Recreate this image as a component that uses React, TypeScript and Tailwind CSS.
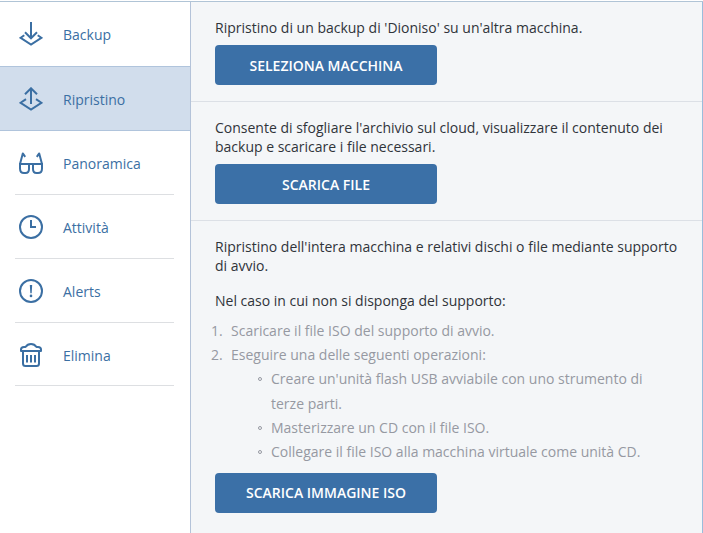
import type { ReactNode } from "react";

function Icon({ children }: { children: ReactNode }) {
  return (
    <svg
      width="24"
      height="24"
      viewBox="0 0 24 24"
      fill="none"
      stroke="currentColor"
      strokeWidth="2"
      className="shrink-0"
    >
      {children}
    </svg>
  );
}

const backupIcon = (
  <Icon>
    <path d="M12 0v16M6 10.3l6 6 6-6" />
    <path d="M5.3 13.2L1.6 15.8 12 22.6l10.4-6.8-3.7-2.6" />
  </Icon>
);

const restoreIcon = (
  <Icon>
    <path d="M12 17V1.5M6 7.3l6-6 6 6" />
    <path d="M7 12.1L1.6 15.8 12 22.6l10.4-6.8L17 12.1" />
  </Icon>
);

const glassesIcon = (
  <Icon>
    <path d="M1 13L3.8 2.4l2.4 3.4M23 13L20.2 2.4l-2.4 3.4" strokeLinejoin="round" />
    <path d="M0 13h24" />
    <path d="M1 13v4.5Q1 22 5 22h1.5Q10 22 10 18v-5M23 13v4.5Q23 22 19 22h-1.5Q14 22 14 18v-5" />
  </Icon>
);

const clockIcon = (
  <Icon>
    <circle cx="12" cy="12" r="11" />
    <path d="M12 5v7h5" />
  </Icon>
);

const alertIcon = (
  <Icon>
    <circle cx="12" cy="12" r="11" />
    <path d="M10.8 6h2.4l-.5 8.2h-1.4z" fill="currentColor" stroke="none" />
    <circle cx="12" cy="16.9" r="1.3" fill="currentColor" stroke="none" />
  </Icon>
);

const trashIcon = (
  <Icon>
    <path d="M2 8V6.5Q2 4 5 4h1.5Q8.5 1 12 1t5.5 3H19q3 0 3 2.5V8z" strokeLinejoin="round" />
    <path d="M4 8v12.5Q4 23 6.5 23h11q2.5 0 2.5-2.5V8" />
    <path d="M8 12v7.5M12 12v7.5M16 12v7.5" />
  </Icon>
);

function Item({ icon, label, row }: { icon: ReactNode; label: string; row: string }) {
  return (
    <li className={`mr-4 ml-[15px] flex items-center gap-5 border-b border-[#dddfe2] pl-1 ${row}`}>
      {icon}
      <span className="pt-0.5">{label}</span>
    </li>
  );
}

function Action({ children }: { children: string }) {
  return (
    <button className="block h-10 w-[222px] rounded bg-[#3b70a7] text-center font-semibold text-white">
      {children}
    </button>
  );
}

function Step({ number, children }: { number: string; children: ReactNode }) {
  return (
    <li className="flex">
      <span className="-ml-1 w-5 shrink-0">{number}</span>
      <div>{children}</div>
    </li>
  );
}

function Bullet({ children }: { children: string }) {
  return (
    <li className="flex">
      <span className="mt-[10px] mr-[9px] -ml-[13px] size-1 shrink-0 rounded-full border border-[#9699a2]" />
      <span>{children}</span>
    </li>
  );
}

export default function App() {
  return (
    <div className="h-[533px] w-[703px] overflow-hidden bg-white pt-px font-['Open_Sans',sans-serif] text-sm">
      <div className="flex h-full border-t border-[#b0c4d6]">
        <ul className="w-[190px] shrink-0 text-[#3b6fa3]">
          <li className="flex h-16 items-center gap-5 pl-[19px]">
            {backupIcon}
            <span className="pt-0.5">Backup</span>
          </li>
          <li className="flex h-[65px] items-center gap-5 border-y border-[#b0c4dc] bg-[#d1ddec] pt-px pl-[19px]">
            {restoreIcon}
            <span className="pt-0.5">Ripristino</span>
          </li>
          <Item icon={glassesIcon} label="Panoramica" row="h-16 pt-px" />
          <Item icon={clockIcon} label="Attività" row="h-16 pt-px" />
          <Item icon={alertIcon} label="Alerts" row="h-16 pt-px" />
          <Item icon={trashIcon} label="Elimina" row="h-[63px] pt-0.5" />
        </ul>

        <main className="flex-1 border-x border-r-[#9bbcdb] border-l-[#b4c3d9] bg-[#f4f6f8] leading-[19px] text-[#30343a]">
          <section className="border-b border-[#dce0e6] px-6 py-4">
            <p className="mb-2">Ripristino di un backup di 'Dioniso' su un'altra macchina.</p>
            <Action>SELEZIONA MACCHINA</Action>
          </section>
          <section className="border-b border-[#dce0e6] px-6 py-4">
            <p className="mb-2">
              Consente di sfogliare l'archivio sul cloud, visualizzare il contenuto dei backup e scaricare i file
              necessari.
            </p>
            <Action>SCARICA FILE</Action>
          </section>
          <section className="px-6 pt-4">
            <p className="mb-4">
              Ripristino dell'intera macchina e relativi dischi o file mediante supporto di avvio.
            </p>
            <p className="mb-[9px]">Nel caso in cui non si disponga del supporto:</p>
            <ol className="mb-[8.6px] leading-[24.2px] text-[#9699a2]">
              <Step number="1.">Scaricare il file ISO del supporto di avvio.</Step>
              <Step number="2.">
                Eseguire una delle seguenti operazioni:
                <ul className="pl-10">
                  <Bullet>Creare un'unità flash USB avviabile con uno strumento di terze parti.</Bullet>
                  <Bullet>Masterizzare un CD con il file ISO.</Bullet>
                  <Bullet>Collegare il file ISO alla macchina virtuale come unità CD.</Bullet>
                </ul>
              </Step>
            </ol>
            <Action>SCARICA IMMAGINE ISO</Action>
          </section>
        </main>
      </div>
    </div>
  );
}
